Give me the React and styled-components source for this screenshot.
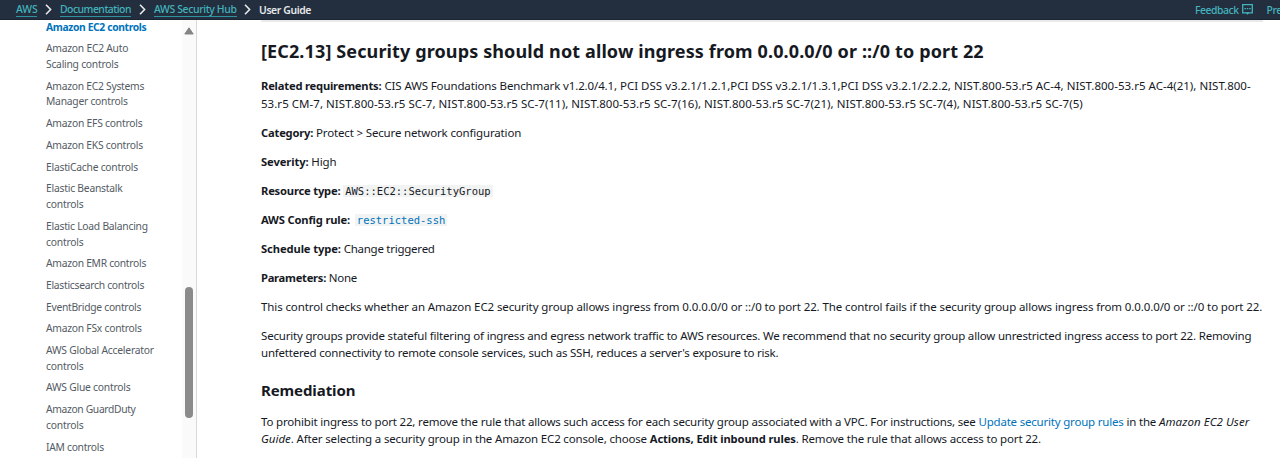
import React from "react";
import styled, { createGlobalStyle } from "styled-components";

const Global = createGlobalStyle`
  * { box-sizing: border-box; }
  body { margin: 0; background: #fff; overflow: hidden; font-family: "Noto Sans", "Open Sans", sans-serif; color: #16191f; }
`;

const Page = styled.div`
  height: 458px;
  display: flex;
  flex-direction: column;
  overflow: hidden;
`;

const TopBar = styled.header`
  flex: none;
  height: 20px;
  background: #232f3e;
  border-bottom: 1px solid #1a2433;
  display: flex;
  align-items: center;
  padding-left: 16px;
  font-size: 10.4px;
  font-weight: 500;
  line-height: 14px;
  white-space: nowrap;
  overflow: hidden;
`;

const Crumb = styled.a`
  flex: none;
  width: ${(p) => p.$w}px;
  height: 15px;
  line-height: 15px;
  color: #44b3bd;
  border-bottom: 1px solid #2e939f;
  letter-spacing: ${(p) => p.$ls || 0}px;
`;

const Current = styled.span`
  flex: none;
  width: 936px;
  color: #e6e8ea;
  font-weight: 600;
  letter-spacing: ${(p) => p.$ls || 0}px;
`;

const Chevron = styled.svg`
  flex: none;
  width: 7px;
  height: 11px;
  margin: 0 ${(p) => p.$r}px 0 ${(p) => p.$l}px;
`;

const TopLink = styled.a`
  flex: none;
  display: flex;
  align-items: center;
  gap: 3px;
  margin-right: 14px;
  color: #44b3bd;
  letter-spacing: -0.45px;
`;

const Body = styled.div`
  flex: 1;
  min-height: 0;
  display: flex;
`;

const Sidebar = styled.nav`
  flex: none;
  width: 197px;
  border-right: 1px solid #d5dbdb;
  display: flex;
  justify-content: space-between;
  overflow: hidden;
`;

const NavList = styled.ul`
  list-style: none;
  margin: 0;
  padding: 0 0 0 46px;
  margin-top: -0.5px;
  display: flex;
  flex-direction: column;
  gap: 5.9px;
`;

const NavItem = styled.li`
  flex: none;
  font-size: 10.3px;
  line-height: 15.8px;
  white-space: pre;
  color: ${(p) => (p.$active ? "#0073bb" : "#545b64")};
  font-weight: ${(p) => (p.$active ? 700 : 400)};
`;

const NavLine = styled.span`
  display: block;
  letter-spacing: ${(p) => p.$ls}px;
`;

const ScrollTrack = styled.div`
  width: 14px;
  background: #fafafa;
  display: flex;
  flex-direction: column;
  align-items: center;
`;

const ArrowUp = styled.svg`
  width: 10px;
  height: 8px;
  margin-top: 7px;
`;

const Thumb = styled.div`
  width: 8px;
  height: 131px;
  margin-top: 252px;
  border-radius: 4px;
  background: #8b8b8b;
`;

const Main = styled.main`
  flex: 1;
  min-width: 0;
  padding-left: 64px;
  white-space: nowrap;
`;

const Rule = styled.div`
  width: 1002px;
  height: 2px;
  background: #eaeaed;
`;

const Title = styled.h2`
  margin: 16px 0 0;
  font-size: 18px;
  line-height: 26px;
  font-weight: 700;
  letter-spacing: 0.12px;
`;

const Subtitle = styled.h3`
  margin: 17.2px 0 0;
  font-size: 15px;
  line-height: 22px;
  font-weight: 700;
  letter-spacing: -0.1px;
`;

const Para = styled.p`
  margin: ${(p) => p.$mt || 11.6}px 0 0;
  font-size: 11.5px;
  line-height: 17.45px;
`;

const Line = styled.span`
  display: block;
  letter-spacing: ${(p) => (p.$ls === undefined ? -0.17 : p.$ls)}px;
`;

const Run = styled.span`
  letter-spacing: ${(p) => p.$ls}px;
`;

const Strong = styled.b`
  font-size: 11.2px;
  font-weight: 700;
  letter-spacing: ${(p) => (p.$ls === undefined ? -0.2 : p.$ls)}px;
`;

const Code = styled.code`
  font-family: "DejaVu Sans Mono", "Liberation Mono", monospace;
  font-size: 10.5px;
  line-height: 13px;
  letter-spacing: 0;
  background: #f2f3f3;
  padding: 0 2px;
  margin-left: ${(p) => (p.$link ? 2 : 0)}px;
  color: ${(p) => (p.$link ? "#0073bb" : "#16191f")};
`;

const Link = styled.a`
  color: #0073bb;
  letter-spacing: -0.2px;
`;

const Em = styled.i`
  letter-spacing: ${(p) => p.$ls || 0}px;
`;

const nav = [
  [["Amazon EC2 controls", -0.36]],
  [["Amazon EC2 Auto", -0.24], ["Scaling controls", -0.24]],
  [["Amazon EC2 Systems", -0.26], ["Manager controls", -0.24]],
  [["Amazon EFS controls", -0.22]],
  [["Amazon EKS controls", -0.25]],
  [["ElastiCache controls", -0.24]],
  [["Elastic Beanstalk", -0.22], ["controls", -0.2]],
  [["Elastic Load Balancing", -0.24], ["controls", -0.2]],
  [["Amazon EMR controls", -0.28]],
  [["Elasticsearch controls", -0.27]],
  [["EventBridge controls", -0.28]],
  [["Amazon FSx controls", -0.25]],
  [["AWS Global Accelerator", -0.22], ["controls", -0.2]],
  [["AWS Glue controls", -0.22]],
  [["Amazon GuardDuty", -0.34], ["controls", -0.2]],
  [["IAM controls", -0.28]],
];

const Sep = ({ l, r }) => (
  <Chevron $l={l} $r={r} viewBox="0 0 7 11">
    <path d="M1 0.8 L5.6 5.5 L1 10.2" fill="none" stroke="#e6e8ea" strokeWidth="1.6" />
  </Chevron>
);

export default function App() {
  return (
    <Page>
      <Global />
      <TopBar>
        <Crumb $w={21} $ls={-0.1}>AWS</Crumb>
        <Sep l={8} r={8} />
        <Crumb $w={71} $ls={-0.5}>Documentation</Crumb>
        <Sep l={8} r={8} />
        <Crumb $w={83} $ls={-0.34}>AWS Security Hub</Crumb>
        <Sep l={7} r={8} />
        <Current $ls={-0.38}>User Guide</Current>
        <TopLink>
          Feedback
          <svg width="11" height="11" viewBox="0 0 11 11">
            <path d="M0.7 0.7 H10.3 V8.8 H0.7 Z" fill="none" stroke="#44b3bd" strokeWidth="1.3" />
            <path d="M3.6 8.6 H7.4 L5.5 10.8 Z" fill="#44b3bd" />
            <path d="M2.4 4.7 H8.8" stroke="#44b3bd" strokeWidth="1.2" strokeDasharray="1.5 0.9" />
          </svg>
        </TopLink>
        <TopLink>Preferences</TopLink>
      </TopBar>
      <Body>
        <Sidebar>
          <NavList>
            {nav.map((lines, i) => (
              <NavItem key={i} $active={i === 0}>
                {lines.map(([t, ls]) => (
                  <NavLine key={t} $ls={ls}>{t}</NavLine>
                ))}
              </NavItem>
            ))}
          </NavList>
          <ScrollTrack>
            <ArrowUp viewBox="0 0 10 8"><path d="M5 0.8 L9.2 7 H0.8 Z" fill="#858585" stroke="#858585" strokeLinejoin="round" /></ArrowUp>
            <Thumb />
          </ScrollTrack>
        </Sidebar>
        <Main>
          <Rule />
          <Title>[EC2.13] Security groups should not allow ingress from 0.0.0.0/0 or ::/0 to port 22</Title>
          <Para $mt={13.2}>
            <Line $ls={0.01}><Strong>Related requirements:</Strong> <Run $ls={-0.13}>CIS AWS Foundations Benchmark v1.2.0/4.1,</Run> PCI DSS v3.2.1/1.2.1,PCI DSS v3.2.1/1.3.1,PCI DSS v3.2.1/2.2.2, NIST.800-53.r5 AC-4, NIST.800-53.r5 AC-4(21), NIST.800-</Line>
            <Line $ls={0.04}>53.r5 CM-7, NIST.800-53.r5 SC-7, NIST.800-53.r5 SC-7(11), NIST.800-53.r5 SC-7(16), NIST.800-53.r5 SC-7(21), NIST.800-53.r5 SC-7(4), NIST.800-53.r5 SC-7(5)</Line>
          </Para>
          <Para><Line $ls={-0.16}><Strong>Category:</Strong> Protect &gt; Secure network configuration</Line></Para>
          <Para><Line><Strong $ls={-0.1}>Severity:</Strong> High</Line></Para>
          <Para><Line><Strong>Resource type:</Strong> <Code>AWS::EC2::SecurityGroup</Code></Line></Para>
          <Para><Line><Strong $ls={-0.17}>AWS Config rule:</Strong> <Code $link>restricted-ssh</Code></Line></Para>
          <Para><Line $ls={-0.25}><Strong $ls={-0.1}>Schedule type:</Strong> Change triggered</Line></Para>
          <Para><Line $ls={-0.25}><Strong $ls={-0.27}>Parameters:</Strong> None</Line></Para>
          <Para><Line $ls={-0.105}>This control checks whether an Amazon EC2 security group allows ingress from 0.0.0.0/0 or ::/0 to port 22. The control fails if the security group allows ingress from 0.0.0.0/0 or ::/0 to port 22.</Line></Para>
          <Para>
            <Line $ls={-0.185}>Security groups provide stateful filtering of ingress and egress network traffic to AWS resources. We recommend that no security group allow unrestricted ingress access to port 22. Removing</Line>
            <Line $ls={-0.207}>unfettered connectivity to remote console services, such as SSH, reduces a server's exposure to risk.</Line>
          </Para>
          <Subtitle>Remediation</Subtitle>
          <Para $mt={11.6}>
            <Line $ls={-0.178}>To prohibit ingress to port 22, remove the rule that allows such access for each security group associated with a VPC. For instructions, see <Link>Update security group rules</Link> in the <Em $ls={0.07}>Amazon EC2 User</Em></Line>
            <Line $ls={-0.17}><Em>Guide</Em>. After selecting a security group in the Amazon EC2 console, choose <Strong $ls={-0.12}>Actions, Edit inbound rules</Strong>. Remove the rule that allows access to port 22.</Line>
          </Para>
        </Main>
      </Body>
    </Page>
  );
}
